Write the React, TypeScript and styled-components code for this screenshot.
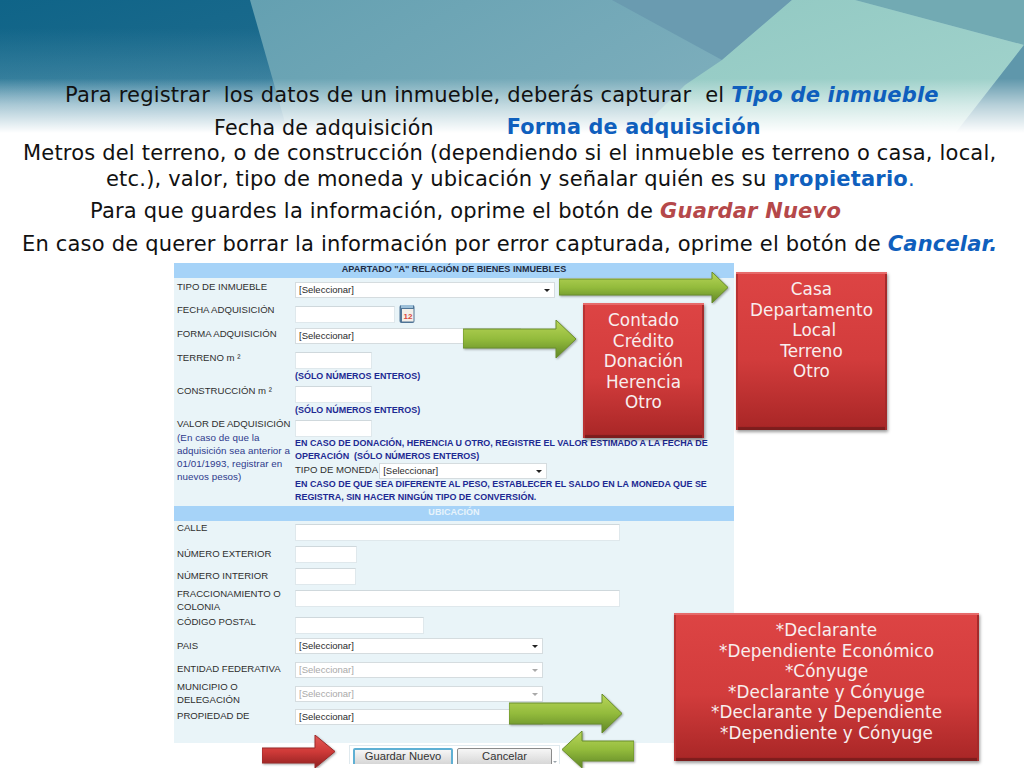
import React from "react";
import styled, { createGlobalStyle } from "styled-components";

const Global = createGlobalStyle`
  html, body { margin: 0; padding: 0; background: #fff; }
  #root { width: 1024px; height: 768px; }
`;

const Slide = styled.div`
  position: relative;
  width: 1024px;
  height: 768px;
  overflow: hidden;
  background: #fff;
  font-family: "DejaVu Sans", Verdana, sans-serif;
`;

const Art = styled.svg`
  position: absolute;
  left: 0;
  top: 0;
  width: 1024px;
  height: 140px;
`;

const Content = styled.div`
  position: relative;
  display: flex;
  flex-direction: column;
  padding-top: 83px;
`;

const Copy = styled.div`
  display: flex;
  flex-direction: column;
  color: #111;
  font-size: 21px;
  letter-spacing: 0.19px;
`;

const Line = styled.div<{ $h: number; $left: number }>`
  height: ${(p) => p.$h}px;
  line-height: 24px;
  padding-left: ${(p) => p.$left}px;
  white-space: pre;
`;

const SplitLine = styled(Line)`
  display: flex;
  align-items: flex-start;
  gap: 73px;
`;

const FechaText = styled.span`
  font-size: 20.6px;
`;

const Blue = styled.b`
  color: #0f5fbd;
`;

const Maroon = styled.b`
  color: #b5484a;
  font-style: italic;
`;

const BlueItalic = styled(Blue)`
  font-style: italic;
`;

const FormForma = styled(Blue)`
  position: relative;
  top: -1px;
  font-size: 20.75px;
`;

const Panel = styled.div`
  width: 560px;
  margin: 6px 0 0 174px;
  background: #e9f4f8;
  font-family: "Liberation Sans", Arial, sans-serif;
  font-size: 9.6px;
  color: #2f2f2f;
`;

const SectionBar = styled.div<{ $light?: boolean }>`
  height: 15px;
  line-height: 12px;
  background: #a6d3f8;
  text-align: center;
  font-size: 9.05px;
  font-weight: bold;
  color: ${(p) => (p.$light ? "#e8f3fb" : "#1f2c44")};
`;

const Rows = styled.div<{ $top: number }>`
  padding-top: ${(p) => p.$top}px;
`;

const Row = styled.div<{ $h: number }>`
  display: grid;
  grid-template-columns: 121px 1fr;
  height: ${(p) => p.$h}px;
`;

const Label = styled.div<{ $shift?: number }>`
  margin-top: ${(p) => p.$shift ?? 0}px;
  padding-left: 3px;
  line-height: 12.5px;
  font-size: 9.6px;
  white-space: nowrap;
`;

const Hint = styled.div`
  color: #2e3a8c;
  font-size: 9.8px;
  line-height: 13.3px;
  letter-spacing: 0.05px;
`;

const Field = styled.div`
  display: flex;
  flex-direction: column;
`;

const Inline = styled.div`
  display: flex;
  align-items: flex-start;
  gap: 4px;
`;

const TextBox = styled.input<{ $w: number }>`
  box-sizing: border-box;
  display: block;
  width: ${(p) => p.$w}px;
  height: 17px;
  padding: 0;
  border: 1px solid #dfe8ec;
  border-top-color: #cfd8dc;
  background: #fff;
`;

const Select = styled.div<{ $w: number; $off?: boolean }>`
  box-sizing: border-box;
  position: relative;
  width: ${(p) => p.$w}px;
  height: 16px;
  padding-left: 3px;
  border: 1px solid #d5dcdf;
  background: #fff;
  line-height: 13px;
  font-size: 9.5px;
  color: ${(p) => (p.$off ? "#a9a9a9" : "#2a2a2a")};
  &::after {
    content: "";
    position: absolute;
    right: 4px;
    top: 6px;
    border: 3px solid transparent;
    border-top: 3px solid ${(p) => (p.$off ? "#a9a9a9" : "#222")};
    border-bottom: 0;
  }
`;

const Note = styled.div<{ $h: number; $pad?: number }>`
  height: ${(p) => p.$h}px;
  padding-top: ${(p) => p.$pad ?? 0}px;
  box-sizing: border-box;
  color: #1d2a93;
  font-size: 8.95px;
  font-weight: bold;
  line-height: 13px;
  white-space: pre;
`;

const MoneyRow = styled.div`
  display: flex;
  align-items: flex-start;
  height: 15px;
  gap: 1px;
  font-size: 9.6px;
  line-height: 14px;
`;

const ButtonBar = styled.div`
  position: relative;
  display: flex;
  gap: 4px;
  box-sizing: border-box;
  width: 211px;
  height: 19px;
  margin: 2px 0 0 349px;
  padding: 2px 0 0 3px;
  border: 1px solid #dfe9ee;
  border-bottom: 0;
  overflow: hidden;
  font-family: "Liberation Sans", Arial, sans-serif;
  &::after {
    content: "";
    position: absolute;
    right: 2px;
    bottom: 1px;
    border: 2px solid transparent;
    border-top: 2px solid #9aa4aa;
    border-bottom: 0;
  }
`;

const Btn = styled.div<{ $w: number; $primary?: boolean }>`
  box-sizing: border-box;
  width: ${(p) => p.$w}px;
  height: 24px;
  border: ${(p) => (p.$primary ? "2px solid #5fb0d4" : "1px solid #8b8b8b")};
  border-radius: 2px;
  background: linear-gradient(#f6f6f6, #c9c9c9);
  text-align: center;
  font-size: 11.2px;
  line-height: ${(p) => (p.$primary ? 13 : 15)}px;
  color: #333;
`;

const Callout = styled.div<{ $x: number; $y: number; $w: number; $h: number; $pad: number }>`
  position: absolute;
  box-sizing: border-box;
  left: ${(p) => p.$x}px;
  top: ${(p) => p.$y}px;
  width: ${(p) => p.$w}px;
  height: ${(p) => p.$h}px;
  padding-top: ${(p) => p.$pad}px;
  background: linear-gradient(#dd4444 0%, #d23c3c 55%, #a82626 100%);
  box-shadow: inset 0 2px 0 #e66a6a, inset 2px 0 0 #b93232, inset -2px 0 0 #a52a2a,
    inset 0 -3px 1px #7c1d1d, 1px 2px 3px rgba(0, 0, 0, 0.4);
  color: #f8eeee;
  font-size: 16.8px;
  letter-spacing: 0.08px;
  line-height: 20.5px;
  text-align: center;
  white-space: pre;
`;

const ArrowSvg = styled.svg<{ $x: number; $y: number }>`
  position: absolute;
  left: ${(p) => p.$x}px;
  top: ${(p) => p.$y}px;
  filter: drop-shadow(1px 1px 1px rgba(0, 0, 0, 0.35));
`;

type ArrowProps = {
  x: number; y: number; w: number; h: number;
  top: number; bottom: number; head: number;
  left?: boolean; red?: boolean; id: string;
};

function Arrow({ x, y, w, h, top, bottom, head, left, red, id }: ArrowProps) {
  const pts = left
    ? `0,${h / 2} ${head},0 ${head},${top} ${w},${top} ${w},${bottom} ${head},${bottom} ${head},${h}`
    : `0,${top} ${head},${top} ${head},0 ${w},${h / 2} ${head},${h} ${head},${bottom} 0,${bottom}`;
  const stops = red
    ? ["#e25a56", "#cf3a38", "#8e1f1f"]
    : ["#b9d65a", "#93bb3c", "#5f8626"];
  return (
    <ArrowSvg $x={x} $y={y} width={w} height={h} viewBox={`0 0 ${w} ${h}`}>
      <defs>
        <linearGradient id={id} x1="0" y1="0" x2="0" y2="1">
          <stop offset="0" stopColor={stops[0]} />
          <stop offset="0.5" stopColor={stops[1]} />
          <stop offset="1" stopColor={stops[2]} />
        </linearGradient>
      </defs>
      <polygon points={pts} fill={`url(#${id})`} stroke={red ? "#9c2a2a" : "#6b8f2c"} strokeWidth="1" />
    </ArrowSvg>
  );
}

const CalendarIcon = styled.svg`
  margin-top: -2px;
`;

function Calendar() {
  return (
    <CalendarIcon width="16" height="20" viewBox="0 0 16 20">
      <rect x="0.5" y="1" width="15" height="18" rx="2" fill="#4f7496" />
      <rect x="3" y="5" width="11.5" height="12.5" fill="#f3efe9" />
      <rect x="2" y="1" width="12" height="3" fill="#9cbfd8" />
      <text x="4.5" y="15" fontSize="8" fontWeight="bold" fontFamily="Liberation Sans" fill="#d9483c">12</text>
    </CalendarIcon>
  );
}

export default function App() {
  return (
    <Slide>
      <Global />
      <Art viewBox="0 0 1024 140" preserveAspectRatio="none">
        <defs>
          <linearGradient id="base" x1="0" y1="0" x2="1" y2="0.45">
            <stop offset="0" stopColor="#0f6488" />
            <stop offset="0.45" stopColor="#1f6c8e" />
            <stop offset="1" stopColor="#4f84a2" />
          </linearGradient>
          <linearGradient id="lift" x1="0" y1="0" x2="0" y2="1">
            <stop offset="0.2" stopColor="#8fc0cf" stopOpacity="0" />
            <stop offset="0.7" stopColor="#8fc0cf" stopOpacity="0.35" />
          </linearGradient>
          <linearGradient id="pale" x1="0" y1="0" x2="1" y2="0.3">
            <stop offset="0" stopColor="#64a0b1" />
            <stop offset="1" stopColor="#86b3c0" />
          </linearGradient>
          <linearGradient id="teal" x1="0" y1="0" x2="1" y2="1">
            <stop offset="0" stopColor="#90c8c2" />
            <stop offset="1" stopColor="#a4d4cd" />
          </linearGradient>
          <linearGradient id="fade" x1="0" y1="0" x2="0" y2="1">
            <stop offset="0.56" stopColor="#fff" stopOpacity="0" />
            <stop offset="0.75" stopColor="#fff" stopOpacity="0.55" />
            <stop offset="0.95" stopColor="#fff" stopOpacity="1" />
          </linearGradient>
        </defs>
        <rect width="1024" height="140" fill="url(#base)" />
        <rect width="290" height="140" fill="url(#lift)" />
        <polygon points="250,0 1024,0 1024,140 290,140" fill="url(#pale)" />
        <polygon points="612,0 792,0 722,60" fill="#6a9bb0" />
        <polygon points="855,0 1024,0 1024,45" fill="#72aab3" />
        <polygon points="792,0 855,0 1024,45 950,140 630,140 685,85 722,60" fill="url(#teal)" />
        <polygon points="1024,45 1024,140 950,140" fill="#5f97ab" />
        <rect width="1024" height="140" fill="url(#fade)" />
      </Art>
      <Content>
        <Copy>
          <Line $h={33} $left={65}>
            Para registrar  los datos de un inmueble, deberás capturar  el <BlueItalic>Tipo de inmueble</BlueItalic>
          </Line>
          <SplitLine $h={25} $left={214}>
            <FechaText>Fecha de adquisición</FechaText>
            <FormForma>Forma de adquisición</FormForma>
          </SplitLine>
          <Line $h={26} $left={23}>
            Metros del terreno, o de construcción (dependiendo si el inmueble es terreno o casa, local,
          </Line>
          <Line $h={32} $left={106}>
            etc.), valor, tipo de moneda y ubicación y señalar quién es su <Blue>propietario</Blue><Blue as="span">.</Blue>
          </Line>
          <Line $h={33} $left={90}>
            Para que guardes la información, oprime el botón de <Maroon>Guardar Nuevo</Maroon>
          </Line>
          <Line $h={25} $left={22}>
            En caso de querer borrar la información por error capturada, oprime el botón de <BlueItalic>Cancelar.</BlueItalic>
          </Line>
        </Copy>
        <Panel>
          <SectionBar>APARTADO "A" RELACIÓN DE BIENES INMUEBLES</SectionBar>
          <Rows $top={4}>
            <Row $h={24}>
              <Label $shift={-1}>TIPO DE INMUEBLE</Label>
              <Select $w={260}>[Seleccionar]</Select>
            </Row>
            <Row $h={22}>
              <Label $shift={-2}>FECHA ADQUISICIÓN</Label>
              <Inline>
                <TextBox $w={100} readOnly />
                <Calendar />
              </Inline>
            </Row>
            <Row $h={24}>
              <Label>FORMA ADQUISICIÓN</Label>
              <Select $w={226}>[Seleccionar]</Select>
            </Row>
            <Row $h={34}>
              <Label>TERRENO m ²</Label>
              <Field>
                <TextBox $w={77} readOnly />
                <Note $h={17} $pad={1}>(SÓLO NÚMEROS ENTEROS)</Note>
              </Field>
            </Row>
            <Row $h={34}>
              <Label $shift={-1}>CONSTRUCCIÓN m ²</Label>
              <Field>
                <TextBox $w={77} readOnly />
                <Note $h={17} $pad={1}>(SÓLO NÚMEROS ENTEROS)</Note>
              </Field>
            </Row>
            <Row $h={86}>
              <Label $shift={-2}>
                VALOR DE ADQUISICIÓN
                <Hint>(En caso de que la<br />adquisición sea anterior a<br />01/01/1993, registrar en<br />nuevos pesos)</Hint>
              </Label>
              <Field>
                <TextBox $w={77} readOnly />
                <Note $h={26} $pad={0}>{"EN CASO DE DONACIÓN, HERENCIA U OTRO, REGISTRE EL VALOR ESTIMADO A LA FECHA DE\nOPERACIÓN  (SÓLO NÚMEROS ENTEROS)"}</Note>
                <MoneyRow>
                  TIPO DE MONEDA
                  <Select $w={168}>[Seleccionar]</Select>
                </MoneyRow>
                <Note $h={27} $pad={0}>{"EN CASO DE QUE SEA DIFERENTE AL PESO, ESTABLECER EL SALDO EN LA MONEDA QUE SE\nREGISTRA, SIN HACER NINGÚN TIPO DE CONVERSIÓN."}</Note>
              </Field>
            </Row>
          </Rows>
          <SectionBar $light>UBICACIÓN</SectionBar>
          <Rows $top={3}>
            <Row $h={22}><Label $shift={-2}>CALLE</Label><TextBox $w={325} readOnly /></Row>
            <Row $h={22}><Label $shift={2}>NÚMERO EXTERIOR</Label><TextBox $w={62} readOnly /></Row>
            <Row $h={22}><Label $shift={2}>NÚMERO INTERIOR</Label><TextBox $w={61} readOnly /></Row>
            <Row $h={27}><Label $shift={-2}>FRACCIONAMIENTO O<br />COLONIA</Label><TextBox $w={325} readOnly /></Row>
            <Row $h={21}><Label $shift={-1}>CÓDIGO POSTAL</Label><TextBox $w={129} readOnly /></Row>
            <Row $h={24}><Label $shift={2}>PAIS</Label><Select $w={248}>[Seleccionar]</Select></Row>
            <Row $h={24}><Label $shift={1}>ENTIDAD FEDERATIVA</Label><Select $w={248} $off>[Seleccionar]</Select></Row>
            <Row $h={23}><Label $shift={-5}>MUNICIPIO O<br />DELEGACIÓN</Label><Select $w={248} $off>[Seleccionar]</Select></Row>
            <Row $h={34}><Label $shift={1}>PROPIEDAD DE</Label><Select $w={248}>[Seleccionar]</Select></Row>
          </Rows>
        </Panel>
        <ButtonBar>
          <Btn $w={100} $primary>Guardar Nuevo</Btn>
          <Btn $w={95}>Cancelar</Btn>
        </ButtonBar>
      </Content>

      <Arrow id="a1" x={559} y={272} w={169} h={31} top={7} bottom={23} head={153} />
      <Arrow id="a2" x={463} y={320} w={113} h={38} top={9} bottom={28} head={93} />
      <Arrow id="a3" x={509} y={694} w={113} h={39} top={9} bottom={30} head={93} />
      <Arrow id="a4" x={562} y={731} w={72} h={37} top={10} bottom={30} head={20} left />
      <Arrow id="a5" red x={262} y={735} w={73} h={33} top={13} bottom={28} head={53} />

      <Callout $x={583} $y={303} $w={121} $h={135} $pad={7}>{"Contado\nCrédito\nDonación\nHerencia\nOtro"}</Callout>
      <Callout $x={736} $y={272} $w={151} $h={158} $pad={7}>{"Casa\nDepartamento\n Local\nTerreno\nOtro"}</Callout>
      <Callout $x={674} $y={613} $w={305} $h={148} $pad={7}>{"*Declarante\n*Dependiente Económico\n*Cónyuge\n*Declarante y Cónyuge\n*Declarante y Dependiente\n*Dependiente y Cónyuge"}</Callout>
    </Slide>
  );
}
